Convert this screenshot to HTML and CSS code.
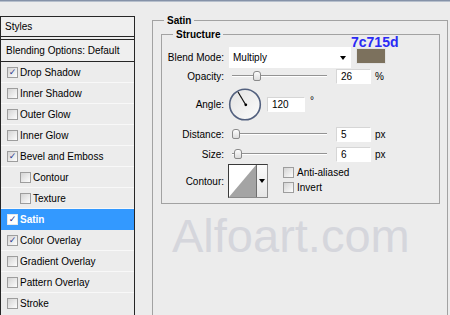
FILE: index.html
```html
<!DOCTYPE html>
<html lang="en">
<head>
    <meta charset="UTF-8">
    <title>Layer Style - Satin</title>
    <link rel="stylesheet" href="styles.css">
</head>
<body>
    <div class="topbar"></div>

    <div class="main">
        <div class="styles-panel">
            <div class="panel-head">Styles</div>
            <div class="panel-head blending">Blending Options: Default</div>
            <ul class="effects">
                <li class="effect"><span class="check on"></span>Drop Shadow</li>
                <li class="effect"><span class="check"></span>Inner Shadow</li>
                <li class="effect"><span class="check"></span>Outer Glow</li>
                <li class="effect"><span class="check"></span>Inner Glow</li>
                <li class="effect"><span class="check on"></span>Bevel and Emboss</li>
                <li class="effect sub"><span class="check"></span>Contour</li>
                <li class="effect sub"><span class="check"></span>Texture</li>
                <li class="effect active"><span class="check on"></span>Satin</li>
                <li class="effect"><span class="check on"></span>Color Overlay</li>
                <li class="effect"><span class="check"></span>Gradient Overlay</li>
                <li class="effect"><span class="check"></span>Pattern Overlay</li>
                <li class="effect last"><span class="check"></span>Stroke</li>
            </ul>
        </div>

        <fieldset class="group outer">
            <legend>Satin</legend>
            <fieldset class="group inner">
                <legend>Structure</legend>

                <div class="row blend">
                    <span class="row-label">Blend Mode:</span>
                    <div class="row-body">
                        <div class="select"><span>Multiply</span><span class="arrow"></span></div>
                        <div class="swatch"><span class="hex">7c715d</span></div>
                    </div>
                </div>

                <div class="row field">
                    <span class="row-label">Opacity:</span>
                    <div class="row-body">
                        <div class="slider"><div class="track"><span class="thumb" style="left: 26%"></span></div></div>
                        <div class="input">26</div>
                        <span class="unit">%</span>
                    </div>
                </div>

                <div class="row angle">
                    <span class="row-label">Angle:</span>
                    <div class="row-body">
                        <svg class="dial" width="34" height="33" viewBox="0 0 34 33">
                            <defs>
                                <linearGradient id="dialFill" x1="0" y1="0" x2="1" y2="1">
                                    <stop offset="0" stop-color="#e2e2e2"/>
                                    <stop offset="1" stop-color="#fcfcfc"/>
                                </linearGradient>
                            </defs>
                            <circle cx="17" cy="16.5" r="15.3" fill="url(#dialFill)" stroke="#52607e" stroke-width="1.6"/>
                            <line x1="17.5" y1="16.5" x2="10" y2="4" stroke="#111" stroke-width="1.2"/>
                            <circle cx="17.8" cy="16.8" r="1.4" fill="#000"/>
                        </svg>
                        <div class="input wide">120</div>
                        <span class="unit deg">&deg;</span>
                    </div>
                </div>

                <div class="row field distance">
                    <span class="row-label">Distance:</span>
                    <div class="row-body">
                        <div class="slider"><div class="track"><span class="thumb" style="left: 4%"></span></div></div>
                        <div class="input">5</div>
                        <span class="unit">px</span>
                    </div>
                </div>

                <div class="row field size">
                    <span class="row-label">Size:</span>
                    <div class="row-body">
                        <div class="slider"><div class="track"><span class="thumb" style="left: 6%"></span></div></div>
                        <div class="input">6</div>
                        <span class="unit">px</span>
                    </div>
                </div>

                <div class="row contour">
                    <span class="row-label">Contour:</span>
                    <div class="row-body">
                        <div class="contour-box">
                            <svg class="curve" width="27" height="32" viewBox="0 0 27 32">
                                <rect width="27" height="32" fill="#fff"/>
                                <polygon points="0,32 27,0 27,32" fill="#a4a4a4"/>
                            </svg>
                            <div class="contour-arrow"><span class="arrow"></span></div>
                        </div>
                        <div class="options">
                            <label class="option"><span class="check"></span>Anti-aliased</label>
                            <label class="option"><span class="check"></span>Invert</label>
                        </div>
                    </div>
                </div>
            </fieldset>

            <div class="watermark">Alfoart.com</div>
        </fieldset>
    </div>
</body>
</html>
```

FILE: styles.css
```css
* {
    box-sizing: border-box;
}

body {
    margin: 0;
    height: 315px;
    overflow: hidden;
    background: #ececec;
    font-family: "Liberation Sans", Arial, sans-serif;
    font-size: 10px;
    color: #000;
}

.topbar {
    height: 2px;
    border-top: 1px solid #8592a8;
    background: #b6bfcc;
}

.main {
    display: flex;
    align-items: flex-start;
    height: 313px;
}

/* left list of effects */
.styles-panel {
    width: 135px;
    height: 299px;
    margin-top: 14px;
    border: 1px solid #262626;
    border-bottom: 0;
    flex: none;
}

.panel-head {
    height: 20px;
    line-height: 19px;
    padding-left: 4px;
    background: #efefef;
    border-bottom: 1px solid #262626;
}

.panel-head.blending {
    height: 23px;
    line-height: 21px;
    margin-top: 2px;
    padding-left: 5px;
    border-top: 1px solid #262626;
}

.effects {
    list-style: none;
    margin: 0;
    padding: 0;
}

.effect {
    height: 21px;
    display: flex;
    align-items: center;
    gap: 2px;
    padding-left: 6px;
    border-bottom: 1px solid #f8f8f8;
}

.effect.last {
    height: 20px;
    border-bottom: 0;
}

.effect.sub {
    padding-left: 19px;
}

.effect.active {
    background: #3399ff;
    color: #fff;
    font-weight: bold;
    border-bottom-color: #3399ff;
}

.check {
    width: 11px;
    height: 11px;
    flex: none;
    display: inline-flex;
    align-items: center;
    justify-content: center;
    border: 1px solid #9d9d9d;
    background: linear-gradient(135deg, #d4d4d4, #fdfdfd);
}

.check.on::after {
    content: "\2713";
    font-family: "DejaVu Sans", sans-serif;
    font-size: 9px;
    font-weight: bold;
    line-height: 1;
    color: #2b3b8e;
}

.effect.active .check {
    background: #fff;
    border-color: #e8e8e8;
}

.effect.active .check.on::after {
    color: #1d2a80;
}

/* right side group boxes */
.group {
    margin: 0;
    min-inline-size: 0;
    border: 1px solid #a2a2a2;
}

.group legend {
    font-weight: bold;
    line-height: 13px;
    padding: 0 3px;
}

.outer {
    width: 296px;
    height: 302px;
    margin: 12px 0 0 17px;
    padding: 1px 7px 0 8px;
    border-bottom: 0;
}

.outer > legend {
    margin-left: 3px;
}

.inner {
    padding: 6px 0 5px 0;
}

.inner > legend {
    margin-left: 11px;
}

.row {
    display: flex;
    align-items: center;
}

.row-label {
    width: 62px;
    flex: none;
    text-align: right;
}

.row-body {
    display: flex;
    align-items: center;
    margin-left: 5px;
}

.blend {
    height: 21px;
}

.blend .row-body {
    height: 21px;
    align-items: flex-start;
}

.select {
    width: 122px;
    height: 21px;
    display: flex;
    align-items: center;
    justify-content: space-between;
    padding: 0 5px 0 4px;
    background: #fff;
}

.arrow {
    width: 0;
    height: 0;
    border-left: 3px solid transparent;
    border-right: 3px solid transparent;
    border-top: 4px solid #000;
}

.swatch {
    position: relative;
    width: 30px;
    height: 16px;
    margin: 1px 0 0 5px;
    background: #7c715d;
    border: 1px solid #e2e2e2;
}

.hex {
    position: absolute;
    bottom: 100%;
    left: -6px;
    font-size: 14px;
    line-height: 14px;
    font-weight: bold;
    color: #2a2af5;
}

.field {
    height: 15px;
    margin-top: 1px;
}

.field.distance {
    margin-top: 6px;
}

.field.size {
    margin-top: 5px;
}

.slider {
    width: 107px;
    height: 15px;
    display: flex;
    align-items: center;
}

.track {
    position: relative;
    width: 95px;
    height: 2px;
    margin: -1px 0 0 3px;
    border-top: 1px solid #939393;
    border-bottom: 1px solid #fff;
}

.thumb {
    position: absolute;
    top: -5px;
    width: 8px;
    height: 10px;
    margin-left: -4px;
    border: 1px solid #8a8a8a;
    border-radius: 3px 3px 2px 2px;
    background: linear-gradient(#fdfdfd, #dcdcdc);
}

.input {
    width: 35px;
    height: 15px;
    line-height: 14px;
    padding-left: 4px;
    background: #fff;
    border: 1px solid #fff;
    border-top-color: #d6d6d6;
    border-left-color: #d6d6d6;
}

.input.wide {
    width: 38px;
    margin-left: 5px;
}

.unit {
    margin-left: 4px;
}

.unit.deg {
    margin-left: 5px;
    align-self: flex-start;
    margin-top: 7px;
}

.angle {
    height: 33px;
    margin-top: 4px;
}

.dial {
    display: block;
    margin-left: -1px;
}

.contour {
    height: 34px;
    margin-top: 2px;
}

.contour .row-body {
    height: 34px;
    align-items: flex-start;
}

.contour-box {
    width: 40px;
    height: 34px;
    margin-left: -1px;
    display: flex;
    border: 1px solid #3a3a3a;
    border-right-color: #8a8a8a;
    border-bottom-color: #8a8a8a;
}

.curve {
    display: block;
}

.contour-arrow {
    flex: 1;
    display: flex;
    align-items: center;
    justify-content: center;
    background: linear-gradient(#fbfbfb, #e6e6e6);
    border-left: 1px solid #6e6e6e;
}

.options {
    display: flex;
    flex-direction: column;
    gap: 4px;
    margin: 3px 0 0 15px;
}

.option {
    display: flex;
    align-items: center;
    gap: 3px;
    height: 11px;
}

.watermark {
    margin: 8px 0 0 11px;
    font-size: 47px;
    line-height: 47px;
    color: #d5d6dc;
}
```
